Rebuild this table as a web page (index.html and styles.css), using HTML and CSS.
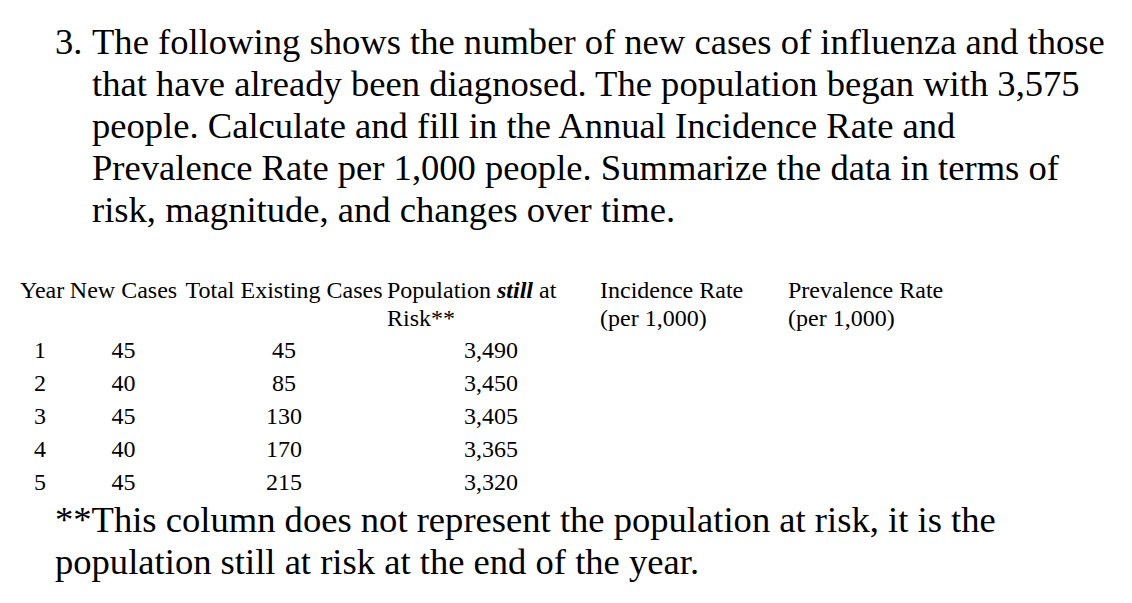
FILE: index.html
```html
<!DOCTYPE html>
<html lang="en">
<head>
<meta charset="utf-8">
<title>Influenza incidence and prevalence</title>
<link rel="stylesheet" href="styles.css">
</head>
<body>
<div class="page">
  <div class="question">
    <span class="qnum">3.</span>
    <p class="qtext">The following shows the number of new cases of influenza and those that have already been diagnosed. The population began with 3,575 people. Calculate and fill in the Annual Incidence Rate and Prevalence Rate per 1,000 people. Summarize the data in terms of risk, magnitude, and changes over time.</p>
  </div>

  <div class="table">
    <div class="th c-year">Year</div>
    <div class="th c-new">New Cases</div>
    <div class="th c-total">Total Existing Cases</div>
    <div class="th c-pop">Population <b><i>still</i></b> at<br>Risk**</div>
    <div class="th c-inc">Incidence Rate<br>(per 1,000)</div>
    <div class="th c-prev">Prevalence Rate<br>(per 1,000)</div>

    <div class="td c-year">1</div><div class="td c-new">45</div><div class="td c-total">45</div><div class="td c-pop num">3,490</div><div class="td"></div><div class="td"></div>
    <div class="td c-year">2</div><div class="td c-new">40</div><div class="td c-total">85</div><div class="td c-pop num">3,450</div><div class="td"></div><div class="td"></div>
    <div class="td c-year">3</div><div class="td c-new">45</div><div class="td c-total">130</div><div class="td c-pop num">3,405</div><div class="td"></div><div class="td"></div>
    <div class="td c-year">4</div><div class="td c-new">40</div><div class="td c-total">170</div><div class="td c-pop num">3,365</div><div class="td"></div><div class="td"></div>
    <div class="td c-year">5</div><div class="td c-new">45</div><div class="td c-total">215</div><div class="td c-pop num">3,320</div><div class="td"></div><div class="td"></div>
  </div>

  <p class="footnote">**This column does not represent the population at risk, it is the population still at risk at the end of the year.</p>
</div>
</body>
</html>
```

FILE: styles.css
```css
html, body {
  margin: 0;
  padding: 0;
  background: #ffffff;
}

body {
  font-family: "Liberation Serif", "Times New Roman", serif;
  color: #000000;
}

.page {
  padding-top: 21px;
}

.question {
  display: flex;
  margin-left: 55px;
  font-size: 36.6px;
  line-height: 42px;
}

.qnum {
  flex: 0 0 37px;
}

.qtext {
  margin: 0;
  width: 1018px;
}

.table {
  display: grid;
  grid-template-columns: 44px 119px 202px 215px 188px 200px;
  margin-top: 45px;
  margin-left: 20px;
  font-size: 24px;
}

.th {
  line-height: 28px;
  margin-bottom: 2px;
  white-space: nowrap;
}

.td {
  line-height: 33px;
}

.c-year,
.c-new,
.c-total {
  text-align: center;
}

.c-year.td {
  padding-right: 4px;
}

.c-pop {
  padding-left: 2px;
}

.c-pop.num {
  text-align: right;
  padding-right: 82px;
}

.footnote {
  margin: 0 0 0 55px;
  width: 1000px;
  font-size: 36.6px;
  line-height: 42px;
}
```
